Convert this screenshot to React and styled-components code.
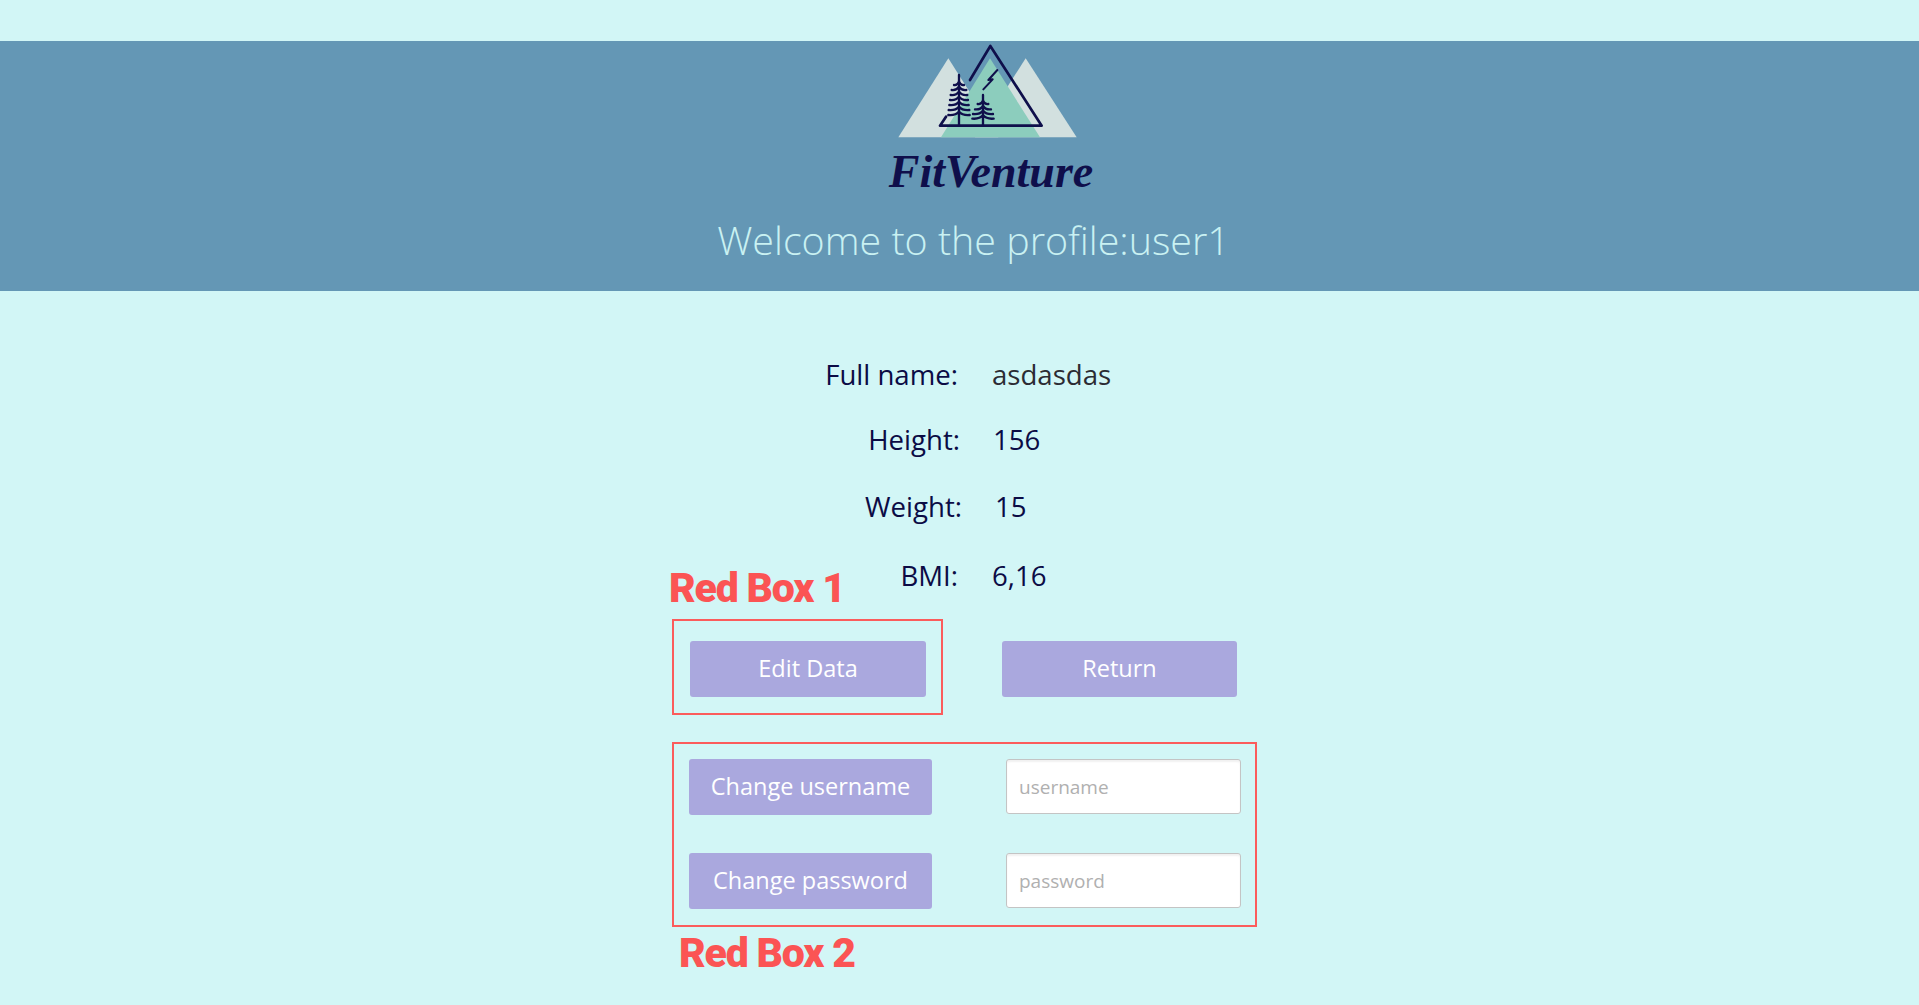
import React from "react";
import styled, { createGlobalStyle } from "styled-components";

const GlobalStyle = createGlobalStyle`
    html, body {
        margin: 0;
        padding: 0;
        background: #d2f6f6;
        overflow: hidden;
    }
    * {
        box-sizing: border-box;
    }
`

const infoRows = [
    { label: "Full name:", value: "asdasdas", height: 65, shift: 0, soft: true },
    { label: "Height:", value: "156", height: 66, shift: 2 },
    { label: "Weight:", value: "15", height: 68, shift: 4 },
    { label: "BMI:", value: "6,16", height: 69, shift: 0 },
]

const bigTree = [
    [165, 15], [180, 22], [195, 25], [210, 27], [225, 29], [240, 31], [255, 32],
]
const smallTree = [
    [222, 16], [238, 24], [252, 30], [266, 32],
]

const Tree = ({ x, top, bottom, rows }) => (
    <g>
        <path d={`M${x} ${top} L${x} ${bottom}`} strokeWidth="7" />
        {rows.map(([y, w]) => (
            <path key={y} d={`M${x - w} ${y} Q${x - w / 3} ${y + 2} ${x} ${y - 10} Q${x + w / 3} ${y + 2} ${x + w} ${y}`} strokeWidth="7" />
        ))}
    </g>
)

const Logo = () => (
    <LogoSvg viewBox="0 33 720 342" aria-label="FitVenture logo">
        <polygon points="265,85 115,322 415,322" fill="#d2e0df" />
        <polygon points="497,85 345,322 650,322" fill="#d2e0df" />
        <polygon points="390,85 243,322 540,322" fill="#8ccdbd" />
        <g fill="none" stroke="#0f0f4b" strokeLinecap="round" strokeLinejoin="round">
            <path d="M330 150 L391 48 L545 287 L240 287 L258 260" strokeWidth="8" />
            <path d="M412 120 L385 150 L398 148 L370 178" strokeWidth="6" />
            <Tree x={297} top={135} bottom={285} rows={bigTree} />
            <Tree x={369} top={195} bottom={285} rows={smallTree} />
        </g>
    </LogoSvg>
)

const App = () => {
    return (
        <>
            <GlobalStyle />
            <Page>
                <Header>
                    <Logo />
                    <Wordmark>FitVenture</Wordmark>
                    <Title>Welcome to the profile:user1</Title>
                </Header>
                <Main>
                    <Content>
                        <Info>
                            {infoRows.map(row => (
                                <InfoRow key={row.label} $height={row.height} $shift={row.shift}>
                                    <Label>{row.label}</Label>
                                    <Value $soft={row.soft}>{row.value}</Value>
                                </InfoRow>
                            ))}
                        </Info>
                        <ButtonRow>
                            <RedBoxOne>
                                <Annotation $top={-55} $left={-5}>Red Box 1</Annotation>
                                <Button $width={236}>Edit Data</Button>
                            </RedBoxOne>
                            <ReturnSlot>
                                <Button $width={235}>Return</Button>
                            </ReturnSlot>
                        </ButtonRow>
                        <RedBoxTwo>
                            <ChangeRow>
                                <Button $width={243}>Change username</Button>
                                <Input placeholder="username" />
                            </ChangeRow>
                            <ChangeRow>
                                <Button $width={243}>Change password</Button>
                                <Input placeholder="password" />
                            </ChangeRow>
                            <Annotation $top={187} $left={5}>Red Box 2</Annotation>
                        </RedBoxTwo>
                    </Content>
                </Main>
            </Page>
        </>
    )
}

const Page = styled.div`
    min-height: 100vh;
    padding-top: 41px;
    background: #d2f6f6;
    font-family: "Open Sans", "Noto Sans", sans-serif;
`
const Header = styled.header`
    display: flex;
    flex-direction: column;
    align-items: center;
    height: 250px;
    background: #6497b5;
`
const LogoSvg = styled.svg`
    display: block;
    width: 240px;
    height: 114px;
    margin-left: 41px;
`
const Wordmark = styled.div`
    margin: -6px 0 0 63px;
    font-family: "Liberation Serif", serif;
    font-style: italic;
    font-weight: 700;
    font-size: 46px;
    line-height: 45px;
    color: #0f0f4b;
`
const Title = styled.h1`
    margin: 19px 0 0 28px;
    font-size: 39.4px;
    line-height: 54px;
    font-weight: 300;
    color: #c9f1f2;
`
const Main = styled.main`
    display: flex;
    justify-content: center;
    padding: 50px 0 0 10px;
`
const Content = styled.div`
    width: 585px;
`
const Info = styled.div`
    display: flex;
    flex-direction: column;
`
const InfoRow = styled.div`
    display: grid;
    grid-template-columns: ${props => 286 + props.$shift}px 1fr;
    column-gap: ${props => (props.$shift ? 33 : 34)}px;
    align-items: center;
    height: ${props => props.$height}px;
    font-size: 27.6px;
    color: #0b0b45;
`
const Label = styled.span`
    text-align: right;
`
const Value = styled.span`
    color: ${props => (props.$soft ? "#2b2b33" : "#0b0b45")};
`
const ButtonRow = styled.div`
    display: flex;
    align-items: flex-start;
    gap: 59px;
    margin-top: 10px;
`
const ReturnSlot = styled.div`
    padding-top: 22px;
`
const RedBox = styled.div`
    position: relative;
    border: 2px solid #fb5c5c;
`
const RedBoxOne = styled(RedBox)`
    width: 271px;
    height: 96px;
    padding: 20px 0 0 16px;
`
const RedBoxTwo = styled(RedBox)`
    display: flex;
    flex-direction: column;
    gap: 38px;
    width: 585px;
    height: 185px;
    margin-top: 27px;
    padding: 15px 0 0 15px;
`
const Annotation = styled.div`
    position: absolute;
    top: ${props => props.$top}px;
    left: ${props => props.$left}px;
    font-family: Roboto, sans-serif;
    font-weight: 900;
    font-size: 41px;
    line-height: 44px;
    letter-spacing: -1.2px;
    white-space: nowrap;
    color: #fb5454;
`
const Button = styled.button`
    display: block;
    width: ${props => props.$width}px;
    height: 56px;
    padding: 0 0 2px;
    border: none;
    border-radius: 3px;
    background: #aaa8de;
    color: #ffffff;
    font-family: inherit;
    font-size: 23.5px;
    font-weight: 400;
`
const ChangeRow = styled.div`
    display: flex;
    gap: 74px;
    align-items: flex-start;
`
const Input = styled.input`
    width: 235px;
    height: 55px;
    padding: 0 12px;
    border: 1px solid #c4c4c4;
    border-radius: 3px;
    background: #ffffff;
    box-shadow: inset 0 2px 2px rgba(0, 0, 0, 0.06);
    font-family: inherit;
    font-size: 19px;
    &::placeholder {
        color: #b0b0b0;
        opacity: 1;
    }
`

export default App;
